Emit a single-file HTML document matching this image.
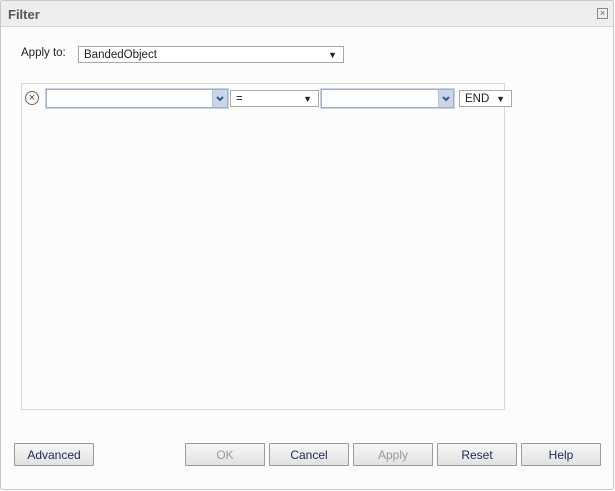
<!DOCTYPE html>
<html><head><style>
*{box-sizing:border-box;margin:0;padding:0}
body{width:615px;height:491px;background:#fff;font-family:"Liberation Sans",Arial,sans-serif;font-size:12px;color:#222;position:relative;overflow:hidden}
.dlg{position:absolute;left:0;top:0;width:614px;height:490px;background:#fcfcfa}
.brd{position:absolute;left:0;top:0;width:614px;height:490px;border:1px solid #c8c8c8;border-radius:3px}
.tb{position:absolute;left:0;top:0;width:614px;height:27px;background:#eeeeec;border-bottom:1px solid #d6d6d6}
.tb b{position:absolute;left:8px;top:7px;font-size:13px;color:#555}
.x{position:absolute;right:6px;top:8px;width:11px;height:11px;border:1px solid #888;font-size:9px;line-height:9px;text-align:center;color:#666}
.a{position:absolute}
.sel{position:absolute;border:1px solid #a9a9a9;background:#fff;height:17px;font-size:11.5px;line-height:17px;padding-left:5px}
.sel .ar{position:absolute;right:6px;top:0;font-size:9px}
.blue{position:absolute;border:1px solid #9eb0c8;background:#fff;height:19px;outline:1px solid #c9d3e0}
.blue .bt{position:absolute;right:0;top:0;width:15px;height:17px;background:#c9d6ea;border-left:1px solid #b3c3da}
.btn{position:absolute;top:443px;height:23px;width:80px;border:1px solid #9a9a9a;background:linear-gradient(#f6f6f6,#e2e2e2);text-align:center;line-height:22px;font-size:12px;color:#1e2a50;border-radius:1px}
.dis{color:#999}
</style></head><body>
<div class="dlg"></div>
<div class="tb"><b>Filter</b><div class="x">×</div></div>
<div class="a" style="left:21px;top:47px;font-size:11.5px">Apply to:</div>
<div class="sel" style="left:78px;top:46px;width:266px">BandedObject<span class="ar">▼</span></div>
<div class="a" style="left:21px;top:83px;width:484px;height:327px;border:1px solid #d8d8d8;background:#fcfcfa"></div>
<div class="a" style="left:25px;top:91px;width:14px;height:14px;border:1px solid #666;border-radius:50%;font-size:11px;line-height:12px;text-align:center;color:#444">×</div>
<div class="blue" style="left:46px;top:89px;width:182px"><div class="bt"><svg width="14" height="17"><path d="M4 7l3 3 3-3" stroke="#3d5580" stroke-width="2" fill="none"/></svg></div></div>
<div class="sel" style="left:230px;top:90px;width:89px">=<span class="ar">▼</span></div>
<div class="blue" style="left:321px;top:89px;width:133px"><div class="bt"><svg width="14" height="17"><path d="M4 7l3 3 3-3" stroke="#3d5580" stroke-width="2" fill="none"/></svg></div></div>
<div class="sel" style="left:459px;top:90px;width:53px">END<span class="ar">▼</span></div>
<div class="btn" style="left:14px">Advanced</div>
<div class="btn dis" style="left:185px">OK</div>
<div class="btn" style="left:269px">Cancel</div>
<div class="btn dis" style="left:353px">Apply</div>
<div class="btn" style="left:437px">Reset</div>
<div class="btn" style="left:521px">Help</div>
<div class="brd"></div>
</body></html>
